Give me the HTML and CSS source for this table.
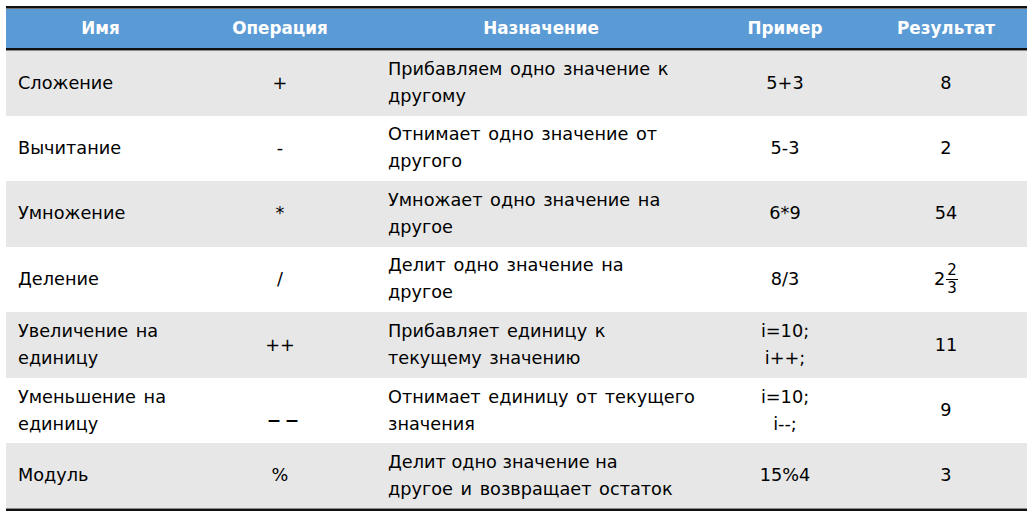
FILE: index.html
```html
<!DOCTYPE html>
<html lang="ru">
<head>
<meta charset="utf-8">
<title>Арифметические операции</title>
<link rel="stylesheet" href="styles.css">
</head>
<body>
<div class="table">
  <div class="row head">
    <div class="cell c">Имя</div>
    <div class="cell c">Операция</div>
    <div class="cell c">Назначение</div>
    <div class="cell c">Пример</div>
    <div class="cell c">Результат</div>
  </div>
  <div class="row odd first">
    <div class="cell">Сложение</div>
    <div class="cell c">+</div>
    <div class="cell">Прибавляем одно значение к<br>другому</div>
    <div class="cell c">5+3</div>
    <div class="cell c">8</div>
  </div>
  <div class="row">
    <div class="cell">Вычитание</div>
    <div class="cell c">-</div>
    <div class="cell">Отнимает одно значение от<br>другого</div>
    <div class="cell c">5-3</div>
    <div class="cell c">2</div>
  </div>
  <div class="row odd">
    <div class="cell">Умножение</div>
    <div class="cell c">*</div>
    <div class="cell">Умножает одно значение на<br>другое</div>
    <div class="cell c">6*9</div>
    <div class="cell c">54</div>
  </div>
  <div class="row">
    <div class="cell">Деление</div>
    <div class="cell c">/</div>
    <div class="cell">Делит одно значение на<br>другое</div>
    <div class="cell c">8/3</div>
    <div class="cell c"><span class="mixed">2<span class="frac"><span class="num">2</span><span class="den">3</span></span></span></div>
  </div>
  <div class="row odd">
    <div class="cell">Увеличение на<br>единицу</div>
    <div class="cell c">++</div>
    <div class="cell">Прибавляет единицу к<br>текущему значению</div>
    <div class="cell c">i=10;<br>i++;</div>
    <div class="cell c">11</div>
  </div>
  <div class="row">
    <div class="cell">Уменьшение на<br>единицу</div>
    <div class="cell c"><span class="dec">– –</span></div>
    <div class="cell">Отнимает единицу от текущего<br>значения</div>
    <div class="cell c">i=10;<br>i--;</div>
    <div class="cell c">9</div>
  </div>
  <div class="row odd last">
    <div class="cell">Модуль</div>
    <div class="cell c">%</div>
    <div class="cell"><span class="tight">Делит одно значение на</span>другое и возвращает остаток</div>
    <div class="cell c">15%4</div>
    <div class="cell c">3</div>
  </div>
</div>
</body>
</html>
```

FILE: styles.css
```css
html, body {
  margin: 0;
  padding: 0;
  background: #ffffff;
}

body {
  padding: 6px 0 0 6px;
  font-family: "DejaVu Sans", "Liberation Sans", sans-serif;
  font-size: 17.7px;
  color: #000000;
}

.table {
  width: 1021px;
  border-top: 2px solid #111111;
  border-bottom: 2px solid #111111;
}

.row {
  display: grid;
  grid-template-columns: 177px 194px 328px 160px 162px;
  box-sizing: border-box;
  height: 65.57px;
  line-height: 27px;
  word-spacing: 2px;
}

.row.odd {
  background: #e7e7e7;
}

.row.first {
  border-top: 1px solid #8a8a8a;
}

.row.last {
  border-bottom: 1px solid #8a8a8a;
}

.head {
  box-sizing: content-box;
  height: 39px;
  background: #5b9bd5;
  border-top: 1px solid #6f6f6f;
  border-bottom: 2px solid #111111;
  color: #ffffff;
  font-weight: bold;
  font-size: 16.8px;
  word-spacing: 0;
}

.cell {
  display: flex;
  flex-direction: column;
  justify-content: center;
  padding: 0 11px;
  white-space: nowrap;
}

.row > .cell:first-child {
  padding-left: 12px;
}

.cell.c {
  align-items: center;
  text-align: center;
  padding: 0;
}

.tight {
  word-spacing: 0;
}

.dec {
  font-size: 27px;
  line-height: 27px;
  letter-spacing: -3px;
  margin-top: 16px;
  padding-left: 3px;
}

.mixed {
  display: inline-flex;
  align-items: center;
}

.frac {
  display: inline-flex;
  flex-direction: column;
  align-items: center;
  font-size: 15px;
  line-height: 17px;
  margin-left: 1px;
}

.num {
  border-bottom: 1px solid #000000;
  padding: 0 1px;
}
```
